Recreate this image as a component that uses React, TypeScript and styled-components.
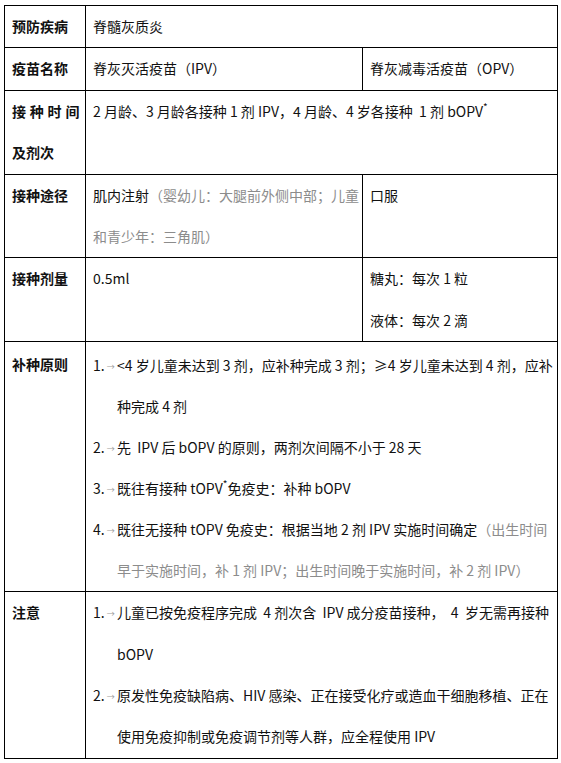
import React from "react";
import styled, { createGlobalStyle } from "styled-components";

const Global = createGlobalStyle`
  html, body { margin: 0; padding: 0; background: #fff; }
  body {
    padding: 5px 4px 0 4px;
    font-family: "Noto Sans CJK SC", "Noto Sans", sans-serif;
    font-size: 14px;
    color: #111;
  }
`;

const Table = styled.table`
  width: 553px;
  border-collapse: collapse;
  table-layout: fixed;
`;

const Col = styled.col<{ $w: number }>`
  width: ${(p) => p.$w}px;
`;

const Cell = styled.td<{ $padTop?: number; $lh?: number }>`
  border: 1px solid #000;
  padding: ${(p) => p.$padTop ?? 0}px 6px 0 7px;
  vertical-align: top;
  line-height: ${(p) => p.$lh ?? 41.4}px;
  white-space: nowrap;
  overflow: hidden;
`;

const Label = styled(Cell)`
  font-weight: 700;
  color: #111;
`;

const Spread = styled.span`
  letter-spacing: 3.8px;
`;

const Line = styled.div`
  white-space: pre;
`;

const Gray = styled.span`
  color: #8c8c8c;
`;

const Sup = styled.span`
  font-size: 10px;
  line-height: 0;
  position: relative;
  top: -6px;
`;

const Item = styled.div`
  display: grid;
  grid-template-columns: 24px 1fr;
  white-space: nowrap;
`;

const Marker = styled.div`
  white-space: nowrap;
`;

const Arrow = styled.span`
  font-size: 8px;
  line-height: 0;
  color: #9a9a9a;
  margin-left: 2px;
  position: relative;
  top: -1px;
`;

const Body = styled.div``;

function ListItem({ n, lines }: { n: number; lines: React.ReactNode[] }) {
  return (
    <Item>
      <Marker>
        {n}.<Arrow>→</Arrow>
      </Marker>
      <Body>
        {lines.map((l, i) => (
          <Line key={i}>{l}</Line>
        ))}
      </Body>
    </Item>
  );
}

export default function App() {
  return (
    <>
      <Global />
      <Table>
        <colgroup>
          <Col $w={81} />
          <Col $w={277} />
          <Col $w={195} />
        </colgroup>
        <tbody>
          <tr>
            <Label>预防疾病</Label>
            <Cell colSpan={2}>脊髓灰质炎</Cell>
          </tr>
          <tr>
            <Label>疫苗名称</Label>
            <Cell>脊灰灭活疫苗（IPV）</Cell>
            <Cell>脊灰减毒活疫苗（OPV）</Cell>
          </tr>
          <tr>
            <Label>
              <Line>
                <Spread>接种时间</Spread>
              </Line>
              <Line>及剂次</Line>
            </Label>
            <Cell colSpan={2}>
              <Line>
                {"2 月龄、3 月龄各接种 1 剂 IPV，4 月龄、4 岁各接种  1 剂 bOPV"}
                <Sup>*</Sup>
              </Line>
            </Cell>
          </tr>
          <tr>
            <Label>接种途径</Label>
            <Cell>
              <Line>
                肌内注射<Gray>（婴幼儿：大腿前外侧中部；儿童</Gray>
              </Line>
              <Line>
                <Gray>和青少年：三角肌）</Gray>
              </Line>
            </Cell>
            <Cell>口服</Cell>
          </tr>
          <tr>
            <Label>接种剂量</Label>
            <Cell>0.5ml</Cell>
            <Cell>
              <Line>糖丸：每次 1 粒</Line>
              <Line>液体：每次 2 滴</Line>
            </Cell>
          </tr>
          <tr>
            <Label $padTop={2} $lh={41}>补种原则</Label>
            <Cell colSpan={2} $padTop={3} $lh={41}>
              <ListItem
                n={1}
                lines={[
                  "<4 岁儿童未达到 3 剂，应补种完成 3 剂；≥4 岁儿童未达到 4 剂，应补",
                  "种完成 4 剂",
                ]}
              />
              <ListItem n={2} lines={["先  IPV 后 bOPV 的原则，两剂次间隔不小于 28 天"]} />
              <ListItem
                n={3}
                lines={[
                  <>
                    既往有接种 tOPV<Sup>*</Sup>免疫史：补种 bOPV
                  </>,
                ]}
              />
              <ListItem
                n={4}
                lines={[
                  <>
                    既往无接种 tOPV 免疫史：根据当地 2 剂 IPV 实施时间确定
                    <Gray>（出生时间</Gray>
                  </>,
                  <Gray>早于实施时间，补 1 剂 IPV；出生时间晚于实施时间，补 2 剂 IPV）</Gray>,
                ]}
              />
            </Cell>
          </tr>
          <tr>
            <Label>注意</Label>
            <Cell colSpan={2}>
              <ListItem
                n={1}
                lines={[
                  "儿童已按免疫程序完成  4 剂次含  IPV 成分疫苗接种，  4  岁无需再接种",
                  "bOPV",
                ]}
              />
              <ListItem
                n={2}
                lines={[
                  "原发性免疫缺陷病、HIV 感染、正在接受化疗或造血干细胞移植、正在",
                  "使用免疫抑制或免疫调节剂等人群，应全程使用 IPV",
                ]}
              />
            </Cell>
          </tr>
        </tbody>
      </Table>
    </>
  );
}
